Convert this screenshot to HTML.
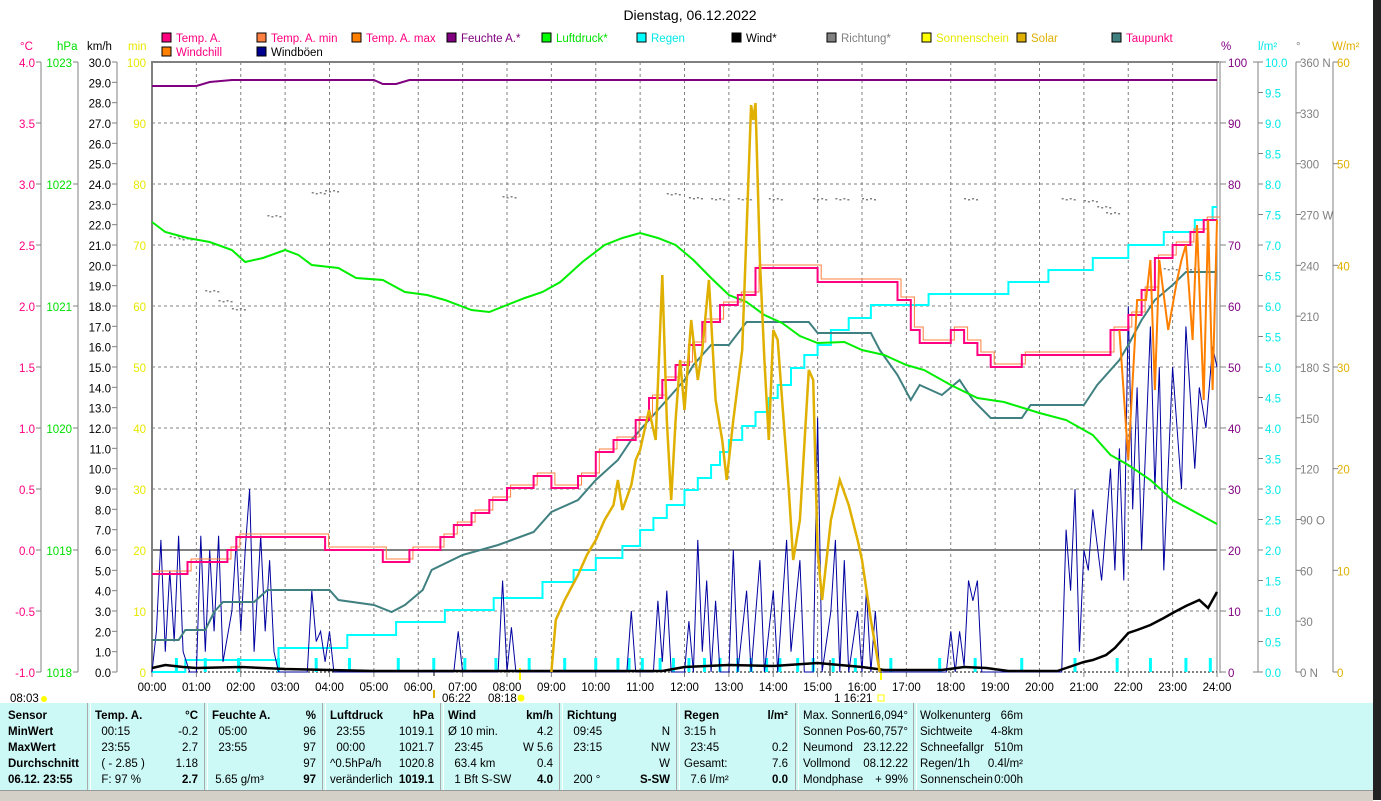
<!DOCTYPE html>
<html><head><meta charset="utf-8">
<style>
body{margin:0;background:#fff;width:1381px;height:800px;overflow:hidden;position:relative;font-family:"Liberation Sans",sans-serif;font-size:11px}
svg{position:absolute;left:0;top:0}
svg text{font-family:"Liberation Sans",sans-serif;font-size:11.5px}
#tbl{position:absolute;left:0;top:703px;width:1373px;height:87px;background:#ccf8f5}
.c{position:absolute;top:5px;line-height:16px;white-space:pre;font-size:11.5px}
.sep{position:absolute;top:0;width:2px;height:87px;border-left:1px solid #aaa;border-right:1px solid #fff}
.b{font-weight:bold}
.r{text-align:right}
#bot{position:absolute;left:0;top:790px;width:1373px;height:10px;background:#d4d0c8;border-top:1px solid #999}
#blk{position:absolute;left:1373px;top:0;width:8px;height:800px;background:#222}
</style></head><body>
<svg id="s" width="1381" height="703" viewBox="0 0 1381 703">
<text x="690" y="20" text-anchor="middle" style="font-size:14px">Dienstag, 06.12.2022</text>
<g id="legend"></g>
<g id="grid"></g>
<g id="axes"></g>
<g id="series"></g>
</svg>
<div id="tbl">
<div class="c b" style="left:8px">Sensor
MinWert
MaxWert
Durchschnitt
06.12. 23:55</div>
<div class="sep" style="left:87px"></div>
<div class="c" style="left:95px"><b>Temp. A.</b>
  00:15
  23:55
  ( - 2.85 )
  F: 97 %</div>
<div class="c r" style="left:150px;width:48px"><b>°C</b>
-0.2
2.7
1.18
<b>2.7</b></div>
<div class="sep" style="left:204px"></div>
<div class="c" style="left:212px"><b>Feuchte A.</b>
  05:00
  23:55

 5.65 g/m³</div>
<div class="c r" style="left:270px;width:46px"><b>%</b>
96
97
97
<b>97</b></div>
<div class="sep" style="left:322px"></div>
<div class="c" style="left:330px"><b>Luftdruck</b>
  23:55
  00:00
^0.5hPa/h
veränderlich</div>
<div class="c r" style="left:380px;width:54px"><b>hPa</b>
1019.1
1021.7
1020.8
<b>1019.1</b></div>
<div class="sep" style="left:440px"></div>
<div class="c" style="left:448px"><b>Wind</b>
Ø 10 min.
  23:45
  63.4 km
  1 Bft S-SW</div>
<div class="c r" style="left:500px;width:53px"><b>km/h</b>
4.2
W 5.6
0.4
<b>4.0</b></div>
<div class="sep" style="left:559px"></div>
<div class="c" style="left:567px"><b>Richtung</b>
  09:45
  23:15

  200 °</div>
<div class="c r" style="left:620px;width:50px">
N
NW
W
<b>S-SW</b></div>
<div class="sep" style="left:676px"></div>
<div class="c" style="left:684px"><b>Regen</b>
3:15 h
  23:45
Gesamt:
  7.6 l/m²</div>
<div class="c r" style="left:740px;width:48px"><b>l/m²</b>

0.2
7.6
<b>0.0</b></div>
<div class="sep" style="left:795px"></div>
<div class="c" style="left:803px">Max. Sonnen
Sonnen Pos
Neumond
Vollmond
Mondphase</div>
<div class="c r" style="left:850px;width:58px">16,094°
-60,757°
23.12.22
08.12.22
+ 99%</div>
<div class="sep" style="left:913px"></div>
<div class="c" style="left:920px">Wolkenunterg
Sichtweite
Schneefallgr
Regen/1h
Sonnenschein</div>
<div class="c r" style="left:980px;width:43px">66m
4-8km
510m
0.4l/m²
0:00h</div>
</div>
<div id="bot"></div>
<div id="blk"></div>
<script>
const NS="http://www.w3.org/2000/svg";
function el(p,t,a,txt){const e=document.createElementNS(NS,t);for(const k in a)e.setAttribute(k,a[k]);if(txt!==undefined)e.textContent=txt;document.getElementById(p).appendChild(e);return e;}
const X=h=>152+44.375*h;
const L=[["Temp. A.","#ff0080","#ff0080"],["Temp. A. min","#ff8040","#ff0080"],["Temp. A. max","#ff8000","#ff0080"],["Feuchte A.*","#800080","#800080"],["Luftdruck*","#00ff00","#00e000"],["Regen","#00ffff","#00e8e8"],["Wind*","#000","#000"],["Richtung*","#808080","#808080"],["Sonnenschein","#ffff00","#e8e800"],["Solar","#e0b000","#e0b000"],["Taupunkt","#408080","#ff0080"]];
L.forEach((l,i)=>{const x=162+95*i;el("legend","rect",{x:x,y:33,width:9,height:9,fill:l[1],stroke:"#000"});el("legend","text",{x:x+14,y:42,fill:l[2]},l[0]);});
el("legend","rect",{x:162,y:47,width:9,height:9,fill:"#ff8000",stroke:"#000"});el("legend","text",{x:176,y:56,fill:"#ff0080"},"Windchill");
el("legend","rect",{x:257,y:47,width:9,height:9,fill:"#000090",stroke:"#000"});el("legend","text",{x:271,y:56,fill:"#000"},"Windböen");
for(let h=1;h<24;h++)el("grid","line",{x1:X(h),y1:62,x2:X(h),y2:672,stroke:"#808080","stroke-dasharray":"3,3"});
for(let i=1;i<10;i++){const y=62+61*i;if(i!=8)el("grid","line",{x1:152,y1:y,x2:1217,y2:y,stroke:"#808080","stroke-dasharray":"3,3"});}
el("grid","line",{x1:152,y1:550,x2:1217,y2:550,stroke:"#808080","stroke-width":2});
el("grid","line",{x1:151,y1:62,x2:1219,y2:62,stroke:"#808080","stroke-width":2});
el("grid","line",{x1:152,y1:61,x2:152,y2:673,stroke:"#808080","stroke-width":2});
el("grid","line",{x1:1217,y1:61,x2:1217,y2:673,stroke:"#808080","stroke-width":1});
el("grid","line",{x1:1220,y1:61,x2:1220,y2:673,stroke:"#808080","stroke-width":1});
el("grid","line",{x1:152,y1:672,x2:1217,y2:672,stroke:"#000","stroke-dasharray":"2,2"});
function axis(x,labels,col,side,lx){el("axes","line",{x1:x,y1:62,x2:x,y2:672,stroke:"#808080"});labels.forEach(([y,t])=>{el("axes","line",{x1:side<0?x-5:x,y1:y,x2:side<0?x:x+5,y2:y,stroke:"#808080"});el("axes","text",{x:lx,y:y+5,fill:col,"text-anchor":side<0?"end":"start"},t);});}
let a=[];for(let i=0;i<=10;i++)a.push([62+61*i,(4-0.5*i).toFixed(1)]);
axis(41,a,"#ff0080",-1,35);
a=[];for(let i=0;i<=5;i++)a.push([62+122*i,String(1023-i)]);axis(78,a,"#00e000",-1,72);
a=[];for(let i=0;i<=30;i++)a.push([62+610/30*i,(30-i).toFixed(1)]);axis(117,a,"#000",-1,111);
a=[];for(let i=0;i<=10;i++)a.push([62+61*i,String(100-10*i)]);
a.forEach(([y,t])=>el("axes","text",{x:146,y:y+5,fill:"#e8e800","text-anchor":"end"},t));
a.forEach(([y,t])=>{el("axes","line",{x1:1220,y1:y,x2:1226,y2:y,stroke:"#808080"});el("axes","text",{x:1228,y:y+5,fill:"#800080"},t);});
a=[];for(let i=0;i<=20;i++)a.push([62+30.5*i,(10-0.5*i).toFixed(1)]);axis(1258,a,"#00e8e8",1,1265);
el("axes","line",{x1:1253,y1:62,x2:1258,y2:62,stroke:"#808080"});el("axes","line",{x1:1253,y1:672,x2:1258,y2:672,stroke:"#808080"});
const dn={360:" N",270:" W",180:" S",90:" O",0:" N"};
a=[];for(let i=0;i<=12;i++){const v=360-30*i;a.push([62+610/12*i,v+(dn[v]||"")]);}axis(1296,a,"#808080",1,1300);
a=[];for(let i=0;i<=6;i++)a.push([62+610/6*i,String(60-10*i)]);axis(1333,a,"#e0b000",1,1337);
[[25,"°C","#ff0080"],[62,"hPa","#00e000"],[92,"km/h","#000"],[133,"min","#e8e800"]].forEach(([x,t,c])=>el("axes","text",{x:x-5,y:50,fill:c},t));
[[1221,"%","#800080"],[1258,"l/m²","#00e8e8"],[1296,"°","#808080"],[1332,"W/m²","#e0b000"]].forEach(([x,t,c])=>el("axes","text",{x:x,y:50,fill:c},t));
for(let h=0;h<=24;h++){el("axes","line",{x1:X(h),y1:672,x2:X(h),y2:677,stroke:"#808080"});el("axes","text",{x:X(h),y:691,"text-anchor":"middle"},String(h).padStart(2,"0")+":00");}
el("axes","text",{x:10,y:702},"08:03");el("axes","circle",{cx:44,cy:699,r:3,fill:"#ffff00"});
el("axes","text",{x:442,y:702},"06:22");el("axes","rect",{x:433,y:690,width:2,height:8,fill:"#e0b000"});
el("axes","text",{x:488,y:702},"08:18");el("axes","circle",{cx:521,cy:698,r:3.5,fill:"#ffff00"});
el("axes","rect",{x:519,y:668,width:2,height:12,fill:"#ffff00"});el("axes","rect",{x:880,y:668,width:2,height:12,fill:"#ffff00"});
el("axes","rect",{x:433,y:660,width:2,height:16,fill:"#808080"});el("axes","rect",{x:829,y:660,width:2,height:16,fill:"#808080"});
el("axes","text",{x:834,y:702},"1 16:21");el("axes","rect",{x:878,y:695,width:6,height:6,fill:"none",stroke:"#ffff00"});
function line(pts,col,w,yf){yf=yf||(v=>v);el("series","polyline",{points:pts.map(p=>X(p[0]).toFixed(1)+","+yf(p[1]).toFixed(1)).join(" "),fill:"none",stroke:col,"stroke-width":w});}
function step(pts){const o=[];pts.forEach((p,i)=>{if(i>0)o.push([p[0],pts[i-1][1]]);o.push(p);});return o;}
[0.55,1.2,1.95,2.85,3.7,4.45,5.55,6.35,7.05,7.75,8.5,9.3,10.0,10.5,10.75,11.05,11.45,11.75,12.1,12.45,12.8,13.2,13.5,13.85,14.15,14.55,14.9,15.35,15.85,16.65,17.75,18.55,19.6,20.8,21.75,22.5,23.3,23.85].forEach(h=>el("series","rect",{x:X(h)-1.5,y:658,width:3,height:14,fill:"#00ffff"}));
[[0.4,236],[0.6,238],[1.2,290],[1.5,300],[1.8,308],[2.6,215],[3.6,192],[3.9,190],[7.9,196],[11.6,193],[12.1,197],[12.6,198],[13.2,198],[13.9,198],[14.9,198],[15.4,198],[16.0,198],[18.3,198],[20.5,198],[21.0,200],[21.3,206],[21.5,212],[22.8,268],[23.3,268]].forEach(([h,y])=>{for(let k=0;k<4;k++)el("series","rect",{x:X(h)+k*4,y:y+(k%2),width:2,height:1.5,fill:"#808080"});});
line(step([[0,672],[0.75,660],[2.85,648],[4.4,635],[5.5,622],[6.6,610],[7.7,598],[8.8,582],[9.5,570],[10.0,558],[10.6,546],[11.0,530],[11.3,518],[11.6,505],[12.0,490],[12.3,478],[12.6,465],[12.8,452],[13.0,440],[13.3,426],[13.6,412],[13.9,398],[14.1,385],[14.4,368],[14.7,355],[15.0,345],[15.3,330],[15.7,318],[16.2,305],[17.5,294],[19.3,282],[20.2,270],[21.2,258],[22.0,245],[22.8,232],[23.5,220],[23.9,207],[24,207]]),"#00ffff",2);
const g=[[0,0],[0.1,2],[0.2,6.5],[0.3,1],[0.4,5],[0.5,1.5],[0.6,6.7],[0.7,1],[0.85,0],[1.0,0],[1.1,6.7],[1.2,1],[1.3,6],[1.4,2],[1.5,6.7],[1.6,0.5],[1.8,3],[1.9,6.5],[2.0,2],[2.1,6],[2.2,9],[2.3,1],[2.45,6.7],[2.55,2],[2.65,5.5],[2.75,1],[2.85,0],[3.5,0],[3.6,4],[3.7,1.5],[3.8,2],[3.9,0.5],[4.0,2],[4.1,0],[6.8,0],[6.9,2],[7.0,0],[7.8,0],[7.9,4.5],[8.0,0],[8.1,2.2],[8.2,0],[10.7,0],[10.8,3],[10.9,0],[11.3,0],[11.4,3.5],[11.5,0.5],[11.6,4],[11.7,0],[12.0,0],[12.1,2.5],[12.2,0],[12.3,6.5],[12.4,1],[12.5,4.5],[12.6,0],[12.7,3.5],[12.8,0],[13.0,0],[13.1,6],[13.2,0],[13.4,4],[13.5,0],[13.7,5.5],[13.8,0],[14.0,4],[14.1,0],[14.3,6.5],[14.4,1],[14.6,5.5],[14.7,0],[14.9,0],[15.0,12.5],[15.1,0],[15.3,3],[15.4,6.5],[15.5,0],[15.6,5.5],[15.7,0],[15.9,3],[16.0,0],[16.1,4],[16.2,0],[16.3,3],[16.4,0],[17.9,0],[18.0,2],[18.1,0],[18.2,2],[18.3,0.3],[18.4,4.5],[18.5,3.5],[18.6,4.5],[18.7,0],[20.5,0],[20.6,7],[20.7,4],[20.8,9],[20.9,1],[21.0,6],[21.1,5],[21.2,8],[21.4,4.5],[21.6,10],[21.7,5],[21.8,11],[21.9,4.5],[22.0,18],[22.1,8],[22.2,14],[22.3,6],[22.5,17],[22.6,9],[22.7,15],[22.8,5],[23.0,15],[23.2,9],[23.3,17],[23.5,10],[23.6,14],[23.75,12],[23.9,16],[24,15]];
line(g,"#0000a0",1,v=>672-20.33*v);
line([[0,668],[0.3,665],[0.7,667],[1,668],[2,667],[3,669],[4,670],[5,671],[11.5,671],[12,667],[13,665],[14,666],[15,663],[15.5,665],[16,667],[16.5,670],[17.8,670],[18.3,667],[18.8,668],[19.3,671],[20.4,671],[20.6,668],[21,662],[21.2,660],[21.5,655],[21.7,648],[22,633],[22.2,630],[22.5,625],[22.8,618],[23,613],[23.3,606],[23.6,600],[23.8,608],[24,592]],"#000",2.5);
line([[0,640],[0.6,640],[0.75,630],[1.2,630],[1.4,612],[1.6,602],[2.3,602],[2.6,590],[4,590],[4.2,600],[5,605],[5.4,612],[5.7,605],[6.1,590],[6.3,570],[7,555],[7.8,545],[8.6,532],[9.0,512],[9.6,500],[10.0,480],[10.5,460],[10.8,440],[11.2,420],[11.6,400],[12.0,380],[12.2,365],[12.6,345],[13.0,345],[13.4,322],[14.8,322],[15.0,333],[16.2,333],[16.4,350],[16.8,375],[17.1,400],[17.3,385],[17.8,395],[18.2,380],[18.5,400],[18.9,418],[19.6,418],[19.8,405],[21.0,405],[21.3,385],[21.8,360],[22.0,345],[22.3,320],[22.6,300],[23.0,285],[23.3,272],[24,272]],"#408080",2);
line([[0,222],[0.3,232],[0.8,238],[1.3,242],[1.8,250],[2.1,262],[2.5,258],[3,250],[3.3,255],[3.6,265],[4.2,268],[4.6,278],[5.2,280],[5.7,292],[6.2,295],[6.6,300],[7.2,310],[7.6,312],[8.0,305],[8.4,298],[8.8,292],[9.2,282],[9.7,262],[10.2,245],[10.6,238],[11.0,233],[11.4,238],[11.8,245],[12.2,260],[12.6,278],[13.0,295],[13.4,302],[13.8,315],[14.2,323],[14.6,336],[15.0,343],[15.6,342],[16.0,350],[16.5,355],[17.0,365],[17.4,370],[18.0,385],[18.6,398],[19.2,402],[20.0,413],[20.6,420],[21.2,435],[21.6,455],[22.0,465],[22.5,480],[23.0,500],[23.5,512],[24,524]],"#00ee00",2);
const tp=[[0,574],[0.6,574],[0.8,562],[1.5,562],[1.7,550],[1.9,537],[3.7,537],[3.9,550],[5,550],[5.2,562],[5.6,562],[5.8,550],[6.3,550],[6.5,537],[6.8,525],[7.2,513],[7.6,500],[8.0,488],[8.6,476],[9.0,488],[9.6,476],[10.0,452],[10.4,440],[10.9,420],[11.2,398],[11.5,380],[11.8,365],[12.1,345],[12.4,322],[12.8,305],[13.2,295],[13.6,268],[14.9,268],[15.0,282],[16.4,282],[16.8,300],[17.1,330],[17.3,343],[17.8,343],[18.0,330],[18.3,343],[18.6,355],[18.9,367],[19.4,367],[19.6,355],[21.3,355],[21.6,330],[22.0,315],[22.3,290],[22.6,258],[23.0,245],[23.4,232],[23.7,220],[24,220]];
const tps=step(tp);
line(tps.map(p=>[p[0]+0.08,p[1]-3]),"#ff8040",1);
line(tps,"#ff0080",2);
line([[21.8,330],[22.0,460],[22.2,300],[22.4,300],[22.5,260],[22.6,390],[22.7,260],[22.9,330],[23.1,280],[23.2,260],[23.3,245],[23.45,340],[23.55,225],[23.7,400],[23.8,220],[23.9,390],[24,220]],"#ff8000",2);
line([[0,86],[1,86],[1.3,82],[1.8,80],[5,80],[5.2,84],[5.5,84],[5.8,80],[24,80]],"#800080",2);
line([[9.0,672],[9.1,620],[9.3,600],[9.6,575],[9.8,555],[10.0,540],[10.2,520],[10.4,505],[10.5,480],[10.6,510],[10.8,485],[10.9,460],[11.0,450],[11.2,410],[11.35,440],[11.5,275],[11.6,420],[11.7,500],[11.8,420],[11.9,360],[12.0,410],[12.15,320],[12.3,380],[12.4,350],[12.55,280],[12.7,400],[12.85,440],[12.95,480],[13.1,420],[13.3,350],[13.4,230],[13.5,105],[13.55,120],[13.6,103],[13.7,260],[13.8,360],[13.9,440],[14.0,330],[14.1,340],[14.2,400],[14.35,490],[14.45,560],[14.6,520],[14.8,370],[14.9,380],[15.0,550],[15.1,600],[15.3,520],[15.5,480],[15.7,505],[15.9,540],[16.0,560],[16.2,620],[16.4,672]],"#e0b000",2.5);
</script>
</body></html>
